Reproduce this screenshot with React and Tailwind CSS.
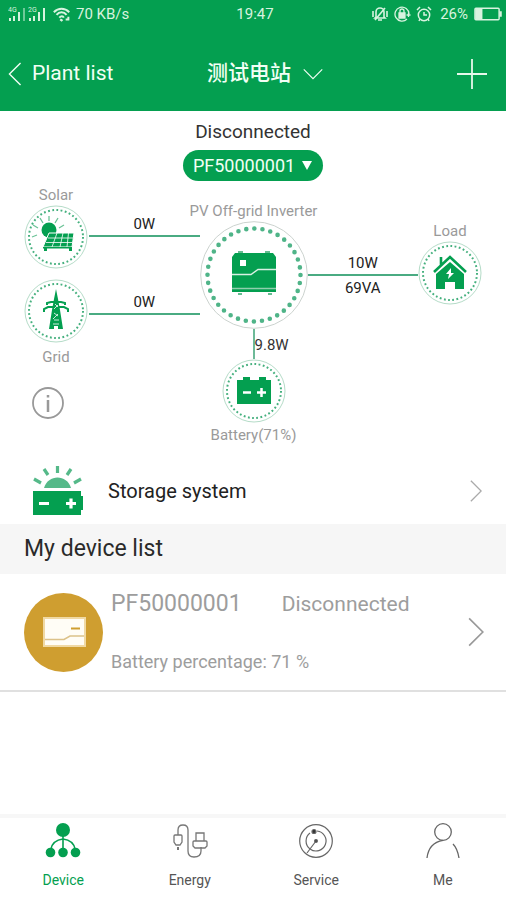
const GREEN = "#049f50";

const TABS = [
  { id: "device", label: "Device", Icon: DeviceIcon },
  { id: "energy", label: "Energy", Icon: EnergyIcon },
  { id: "service", label: "Service", Icon: ServiceIcon },
  { id: "me", label: "Me", Icon: MeIcon },
];

function Chevron({ className }) {
  return (
    <svg
      viewBox="0 0 14 26"
      className={className}
      fill="none"
      stroke="currentColor"
      strokeWidth="1.5"
    >
      <path d="M1 1l12 12L1 25" />
    </svg>
  );
}

function DeviceIcon() {
  return (
    <svg viewBox="0 0 36 36" className="size-9" fill={GREEN}>
      <circle cx="18" cy="8" r="7" />
      <g fill="none" stroke={GREEN} strokeWidth="1.6">
        <path d="M18 14v14M6 27c1-6 5-9 12-10 7 1 11 4 12 10" />
      </g>
      <circle cx="5.5" cy="30.5" r="4.8" />
      <circle cx="18" cy="30.5" r="4.8" />
      <circle cx="30.5" cy="30.5" r="4.8" />
    </svg>
  );
}

function EnergyIcon() {
  return (
    <svg viewBox="0 0 36 36" className="size-9" fill="none" stroke="#777" strokeWidth="1.3">
      <path d="M6 13V8c0-3 2-5 5-5s5 2 5 5v21c0 4 2 6 6 6s7-2 7-6v-4" />
      <path d="M2 14c0-1 1-1 1-1h6s1 0 1 1v6l-2 3H4l-2-3z" />
      <path d="M6 25v3" strokeWidth="2" />
      <path d="M24 11h8v8h-8zM21 20c0-1 1-1 1-1h12s1 0 1 1v4l-2 2H23l-2-2z" />
    </svg>
  );
}

function ServiceIcon() {
  return (
    <svg viewBox="0 0 36 36" className="size-9" fill="none" stroke="#666" strokeWidth="1.2">
      <circle cx="18" cy="19" r="16.3" />
      <path d="M19 9a10 10 0 1 1-7 2M18 19L9 31" />
      <circle cx="18" cy="19" r="1.4" fill="#333" />
      <circle cx="16" cy="9.500" r="2" fill="#333" />
    </svg>
  );
}

function MeIcon() {
  return (
    <svg viewBox="0 0 36 36" className="size-9" fill="none" stroke="#666" strokeWidth="1.3">
      <circle cx="18" cy="10" r="8.3" />
      <path d="M18 18.300C8 20 3 27 2 36M28 22c3 3 5 8 6 14" />
    </svg>
  );
}

function SignalIcon({ label, faded }) {
  return (
    <svg viewBox="0 0 20 16" className="h-4 w-5" fill="#d8f3df">
      <text x="0" y="6" fontSize="7">
        {label}
      </text>
      <path d="M1 12h2v3H1zM5 10h2v5H5zM10 6h2v9h-2z" />
      <path d="M15 2h2v13h-2z" opacity={faded ? 0.5 : 1} />
    </svg>
  );
}

function StatusBar() {
  return (
    <div className="grid h-7 grid-cols-[1fr_auto_1fr] items-center pl-2 pr-1 text-[15px] text-[#d8f3df]">
      <div className="flex items-center">
        <SignalIcon label="4G" faded />
        <SignalIcon label="2G" />
        <svg
          viewBox="0 0 22 16"
          className="ml-1 mr-1 h-4 w-5"
          fill="none"
          stroke="currentColor"
          strokeWidth="2.2"
        >
          <path d="M2 6c5-5 12-5 17 0M5 9c3-4 8-4 11 0M8 12c2-2 4-2 5 0" />
          <path d="M9 14l1.500 1 1-1M15 14h4M18 11v4" />
        </svg>
        <span>70 KB/s</span>
      </div>
      <span>19:47</span>
      <div className="flex items-center justify-end gap-0.5">
        <svg viewBox="0 0 18 16" className="h-4 w-5" fill="none" stroke="currentColor" strokeWidth="1.6">
          <path d="M5 11V6a4 4 0 0 1 8 0v5l1 1H4zM7 14h4M2 5v6M16 5v6M14 2 4 14" />
        </svg>
        <svg viewBox="0 0 18 16" className="h-4 w-5" fill="none" stroke="currentColor" strokeWidth="1.3">
          <path d="M14 13a7 7 0 1 1 2-5M13.500 9h4M15.500 7v4" />
          <path d="M6 7h6v5H6z" fill="currentColor" />
          <path d="M7 7V5a2 2 0 0 1 4 0v2" />
        </svg>
        <svg viewBox="0 0 18 16" className="h-4 w-5" fill="none" stroke="currentColor" strokeWidth="1.5">
          <circle cx="9" cy="9" r="5.700" />
          <path d="M9 6v3h3M2 4l3-3M16 4l-3-3M5 13l-1 2M13 13l1 2" />
        </svg>
        <span className="mx-1">26%</span>
        <svg viewBox="0 0 29 14" className="h-3.5 w-7" fill="none" stroke="currentColor" strokeWidth="1.5">
          <rect x="1" y="1" width="25" height="12" rx="1" />
          <path d="M2 2h6v10H2zM27 5h1v4h-1z" fill="currentColor" />
        </svg>
      </div>
    </div>
  );
}

function Header() {
  return (
    <header className="bg-[#049f50] text-[#f2fff5]">
      <StatusBar />
      <div className="grid h-[83px] grid-cols-[1fr_auto_1fr] items-center pb-1 pl-2 pr-4 pt-3">
        <button className="flex items-center gap-2.5 justify-self-start text-[21px]">
          <Chevron className="h-6 w-3.5 rotate-180" />
          Plant list
        </button>
        <button className="flex items-center gap-4 pl-7 text-[21px] font-medium">
          测试电站
          <Chevron className="h-5 w-3 rotate-90" />
        </button>
        <button aria-label="Add" className="justify-self-end">
          <svg viewBox="0 0 36 36" className="size-9" stroke="#e6f8ea" strokeWidth="1.8">
            <path d="M18 3v30M3 18h30" />
          </svg>
        </button>
      </div>
    </header>
  );
}

// Circle with a dotted inner ring, the icon is drawn in the same 64x64 space
function Ring({ children }) {
  return (
    <svg viewBox="0 0 64 64" className="size-16" fill={GREEN}>
      <circle cx="32" cy="32" r="31" fill="#fff" stroke="#b5dcc8" />
      <circle
        cx="32"
        cy="32"
        r="27"
        fill="none"
        stroke="#45b07e"
        strokeWidth="2"
        strokeDasharray="1.800 2.440"
      />
      {children}
    </svg>
  );
}

function SolarRing() {
  return (
    <Ring>
      <g stroke="#6cc397" strokeWidth="1.3">
        <path d="M25 16v-5M19 18l-3-5M31 18l3-5M14 23l-5-3M35 23l5-3M13 30l-5 2" />
      </g>
      <circle cx="25" cy="25" r="7.500" />
      <path d="M25 28h25l-2 14H19z" stroke="#fff" />
      <path d="M24 33h25M22 37.500h26M33 28l-5 14M39 28l-3 14M44.500 28l-1.500 14" stroke="#fff" strokeWidth="0.8" />
      <path d="M19 42h29v1.500H19zM20 43h3v3h-3zM45 43h3v3h-3z" />
    </Ring>
  );
}

function GridRing() {
  return (
    <Ring>
      <path d="M32 10l2 10 2 11 3 19h-5v-3h-4v3h-5l3-19 2-11z" />
      <path
        d="M20 33v-3l4-2h16l4 2v3M23 26v-2l4-1h10l4 1v2"
        fill="none"
        stroke={GREEN}
        strokeWidth="2"
      />
      <path d="M31 25l3 3M34 26l-4 4M30 34l4 3M34 35l-5 5M30 41h5M29 45h6" stroke="#fff" strokeWidth="0.8" />
    </Ring>
  );
}

function LoadRing() {
  return (
    <Ring>
      <path d="M18 33l14-12 14 12v15h-9v-7h-10v7h-9z" />
      <path d="M16 31l16-15 16 15M23 24v-8" fill="none" stroke={GREEN} strokeWidth="2.6" />
      <path d="M33 27l-5 6h3l-1 5 6-6h-3z" fill="#fff" />
    </Ring>
  );
}

function BatteryRing() {
  return (
    <Ring>
      <path d="M15 21h6v-3h7v3h9v-3h7v3h5v24H15z" />
      <path d="M21 33.500h8M35 33.500h9M39.500 29v9" stroke="#fff" strokeWidth="2.5" />
    </Ring>
  );
}

function InverterRing() {
  return (
    <svg viewBox="0 0 108 108" className="size-27 shrink-0">
      <circle cx="54" cy="54" r="53.300" fill="#fff" stroke="#ccd3cf" />
      <circle
        cx="54"
        cy="54"
        r="46.500"
        fill="none"
        stroke="#4fb488"
        strokeWidth="4.600"
        strokeLinecap="round"
        strokeDasharray="0 8.116"
      />
      <path d="M35 32h38l3 4v35H32V36z" fill={GREEN} />
      <path d="M38 31h5M65 31h5M38 73h4M68 73h4" stroke="#66bc90" strokeWidth="2" />
      <path d="M32 53.500h19l7-5h18" fill="none" stroke="#d9f0e3" strokeWidth="1.4" />
      <path d="M32 67.500h44" stroke="#8fcfad" strokeWidth="1.5" />
      <rect x="40" y="39" width="6" height="6" fill="#fff" />
    </svg>
  );
}

function Flow({ value, below }) {
  return (
    <div className="text-center text-[15px] text-[#222]">
      <p className="h-6 leading-[26px]">{value}</p>
      <div className="h-0.5 bg-[#4aab82]" />
      {below && <p className="h-6 leading-6">{below}</p>}
    </div>
  );
}

function PowerDiagram() {
  return (
    <section className="px-6 pb-3 pt-[9px]">
      <div className="flex flex-col items-center">
        <p className="text-[19px] leading-6 text-[#333]">Disconnected</p>
        <button className="mt-1.5 flex h-[31px] items-center gap-1.5 rounded-full bg-[#049f50] px-2.5 text-lg text-[#f2fff5]">
          PF50000001
          <svg viewBox="0 0 12 12" className="size-3" fill="#fff">
            <path d="M1 1h10L6 10z" />
          </svg>
        </button>
      </div>

      <div className="flex items-start text-[15px] leading-5 text-[#9a9a9a]">
        <div className="flex w-16 flex-col items-center pt-1">
          <p>Solar</p>
          <SolarRing />
          <div className="h-2.5" />
          <GridRing />
          <p className="mt-1">Grid</p>
          <button aria-label="Info" className="mr-4 mt-5">
            <svg viewBox="0 0 32 32" className="size-8" fill="none" stroke="#999" strokeWidth="1.8">
              <circle cx="16" cy="16" r="15" />
              <path d="M16 8v2.500M16 13v12" strokeWidth="2.5" />
            </svg>
          </button>
        </div>
        <div className="flex flex-1 flex-col gap-[52px] pl-px pt-[30px]">
          <Flow value="0W" />
          <Flow value="0W" />
        </div>
        <div className="flex w-27 flex-col items-center whitespace-nowrap pt-5">
          <p>PV Off-grid Inverter</p>
          <InverterRing />
          <div className="ml-auto h-[30px] w-[55px] border-l-2 border-[#6dba98] leading-8 text-[#333]">
            9.8W
          </div>
          <BatteryRing />
          <p className="mt-0.5">Battery(71%)</p>
        </div>
        <div className="flex-1 pt-[69px]">
          <Flow value="10W" below="69VA" />
        </div>
        <div className="flex w-16 flex-col items-center pt-10">
          <p>Load</p>
          <LoadRing />
        </div>
      </div>
    </section>
  );
}

function StorageIcon() {
  return (
    <svg viewBox="0 0 52 52" className="size-13" fill="none">
      <path d="M12 23c4-14 23-14 27 0z" fill="#55b989" />
      <path
        d="M25.500 8V1M16 10l-4-6M35 10l4-6M9 18l-7-4M42 18l7-4"
        stroke="#55b989"
        strokeWidth="3.2"
      />
      <path d="M1 26h48v5h2v14h-2v5H1z" fill={GREEN} />
      <path d="M7 38.500h10M34 38.500h10M39 33.500v10" stroke="#fff" strokeWidth="3.2" />
    </svg>
  );
}

function DeviceList() {
  return (
    <>
      <button className="flex h-[67px] w-full items-center pl-8 pr-6 text-left">
        <StorageIcon />
        <span className="ml-6 flex-1 text-xl text-[#222]">Storage system</span>
        <Chevron className="h-6 w-3 text-[#aaa]" />
      </button>
      <h2 className="bg-[#f6f6f6] px-6 text-[23px] leading-[50px] text-[#2a2a2a]">
        My device list
      </h2>
      <button className="flex w-full items-center border-b-2 border-[#e0e0e0] py-4 pl-6 pr-[22px] text-left text-[#9d9d9d]">
        <svg viewBox="0 0 79 79" className="size-[79px]">
          <circle cx="39.500" cy="39.500" r="39.500" fill="#cf9e30" />
          <rect x="20" y="25" width="41" height="28" fill="#fffdf6" stroke="#f0d9a4" strokeWidth="2" />
          <path d="M21 46.500h19l6-3.500h14" fill="none" stroke="#dcc28a" strokeWidth="1.5" />
          <path d="M47 35.500h9" stroke="#cf9e30" strokeWidth="2" />
        </svg>
        <span className="ml-2 flex-1">
          <span className="flex gap-10 leading-7">
            <span className="text-[23px]">PF50000001</span>
            <span className="text-[21px]">Disconnected</span>
          </span>
          <span className="mt-8 block text-lg leading-6">Battery percentage: 71 %</span>
        </span>
        <Chevron className="h-[30px] w-4 text-[#999]" />
      </button>
    </>
  );
}

function TabBar({ active }) {
  return (
    <nav className="mt-auto grid grid-cols-4 border-t-4 border-[#f7f7f7] pb-2.5 pt-1">
      {TABS.map(({ id, label, Icon }) => (
        <a
          key={id}
          href={`#${id}`}
          className={`flex flex-col items-center gap-3 text-sm ${
            id === active ? "text-[#049f50]" : "text-[#555]"
          }`}
        >
          <Icon />
          {label}
        </a>
      ))}
    </nav>
  );
}

export default function App() {
  return (
    <div className="flex min-h-screen flex-col bg-white font-['Roboto','Noto_Sans_CJK_SC',sans-serif]">
      <Header />
      <main>
        <PowerDiagram />
        <DeviceList />
      </main>
      <TabBar active="device" />
    </div>
  );
}
